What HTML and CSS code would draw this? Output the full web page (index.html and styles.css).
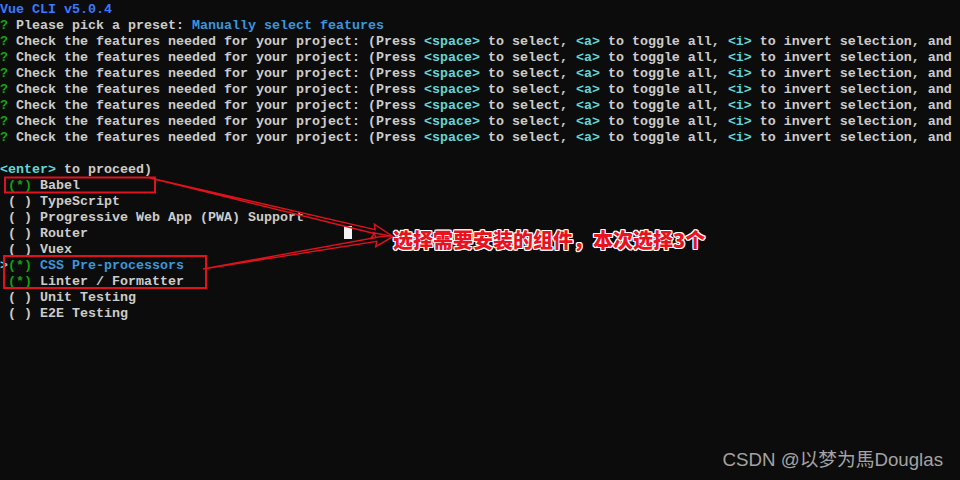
FILE: index.html
```html
<!DOCTYPE html>
<html lang="zh">
<head>
<meta charset="utf-8">
<title>Vue CLI</title>
<link rel="stylesheet" href="styles.css">
</head>
<body>
<div class="term">
<div class="ln"><span class="b">Vue CLI v5.0.4</span></div>
<div class="ln"><span class="g">?</span> Please pick a preset: <span class="lb">Manually select features</span></div>
<div class="ln"><span class="g">?</span> Check the features needed for your project: (Press <span class="c">&lt;space&gt;</span> to select, <span class="c">&lt;a&gt;</span> to toggle all, <span class="c">&lt;i&gt;</span> to invert selection, and</div>
<div class="ln"><span class="g">?</span> Check the features needed for your project: (Press <span class="c">&lt;space&gt;</span> to select, <span class="c">&lt;a&gt;</span> to toggle all, <span class="c">&lt;i&gt;</span> to invert selection, and</div>
<div class="ln"><span class="g">?</span> Check the features needed for your project: (Press <span class="c">&lt;space&gt;</span> to select, <span class="c">&lt;a&gt;</span> to toggle all, <span class="c">&lt;i&gt;</span> to invert selection, and</div>
<div class="ln"><span class="g">?</span> Check the features needed for your project: (Press <span class="c">&lt;space&gt;</span> to select, <span class="c">&lt;a&gt;</span> to toggle all, <span class="c">&lt;i&gt;</span> to invert selection, and</div>
<div class="ln"><span class="g">?</span> Check the features needed for your project: (Press <span class="c">&lt;space&gt;</span> to select, <span class="c">&lt;a&gt;</span> to toggle all, <span class="c">&lt;i&gt;</span> to invert selection, and</div>
<div class="ln"><span class="g">?</span> Check the features needed for your project: (Press <span class="c">&lt;space&gt;</span> to select, <span class="c">&lt;a&gt;</span> to toggle all, <span class="c">&lt;i&gt;</span> to invert selection, and</div>
<div class="ln"><span class="g">?</span> Check the features needed for your project: (Press <span class="c">&lt;space&gt;</span> to select, <span class="c">&lt;a&gt;</span> to toggle all, <span class="c">&lt;i&gt;</span> to invert selection, and</div>
<div class="ln"> </div>
<div class="ln"><span class="c">&lt;enter&gt;</span> to proceed)</div>
<div class="ln"> <span class="g">(*)</span> Babel</div>
<div class="ln"> ( ) TypeScript</div>
<div class="ln"> ( ) Progressive Web App (PWA) Support</div>
<div class="ln"> ( ) Router                                <span class="cursor"> </span></div>
<div class="ln"> ( ) Vuex</div>
<div class="ln"><span class="c">&gt;</span><span class="g">(*)</span> <span class="lb">CSS Pre-processors</span></div>
<div class="ln"> <span class="g">(*)</span> Linter / Formatter</div>
<div class="ln"> ( ) Unit Testing</div>
<div class="ln"> ( ) E2E Testing</div>
</div>

<svg class="marks" width="960" height="480" viewBox="0 0 960 480" xmlns="http://www.w3.org/2000/svg">
  <g fill="none" stroke="#e0121c" stroke-width="2">
    <rect x="5" y="177.5" width="150" height="15"/>
    <rect x="4" y="256" width="202" height="32"/>
  </g>
  <g fill="none" stroke="#e0121c" stroke-width="1.4" stroke-linejoin="miter">
    <g transform="translate(150 178) rotate(13.4)">
      <polygon points="0,0 231,-2 229,-7 248,0 229,7 231,2"/>
    </g>
    <g transform="translate(203 269) rotate(-9.7)">
      <polygon points="0,0 176,-2 174,-7 193,0 174,7 176,2"/>
    </g>
  </g>
</svg>

<div class="note">选择需要安装的组件，本次选择3个</div>
<div class="wm">CSDN @以梦为馬Douglas</div>
</body>
</html>
```
FILE: styles.css
```css
html, body {
  margin: 0;
  padding: 0;
  background: #0c0c0c;
}
body {
  width: 960px;
  height: 480px;
  overflow: hidden;
  position: relative;
}
.term {
  padding-top: 2px;
  font-family: "Liberation Mono", "DejaVu Sans Mono", monospace;
  font-weight: bold;
  font-size: 13.33px;
  line-height: 16px;
  color: #cccccc;
}
.ln {
  height: 16px;
  white-space: pre;
  overflow: hidden;
}
.b { color: #3b78ff; }
.lb { color: #3a96dd; }
.g { color: #13a10e; }
.c { color: #61d6d6; }
.cursor {
  display: inline-block;
  width: 8px;
  height: 15px;
  vertical-align: top;
  margin-top: -2px;
  background: #f2f2f2;
}
.marks {
  position: absolute;
  left: 0;
  top: 0;
  pointer-events: none;
}
.note {
  position: absolute;
  left: 393px;
  top: 227px;
  font-family: "Noto Sans CJK SC", "Noto Sans", sans-serif;
  font-weight: 900;
  font-size: 20px;
  line-height: 26px;
  color: #e8131f;
  text-shadow:
    1px 0 0 #fff, -1px 0 0 #fff, 0 1px 0 #fff, 0 -1px 0 #fff,
    1px 1px 0 #fff, -1px -1px 0 #fff, 1px -1px 0 #fff, -1px 1px 0 #fff;
}
.wm {
  position: absolute;
  right: 17px;
  bottom: 8px;
  font-family: "Liberation Sans", "Noto Sans CJK SC", sans-serif;
  font-size: 18.7px;
  line-height: 24px;
  color: #a3a3a3;
}
```
